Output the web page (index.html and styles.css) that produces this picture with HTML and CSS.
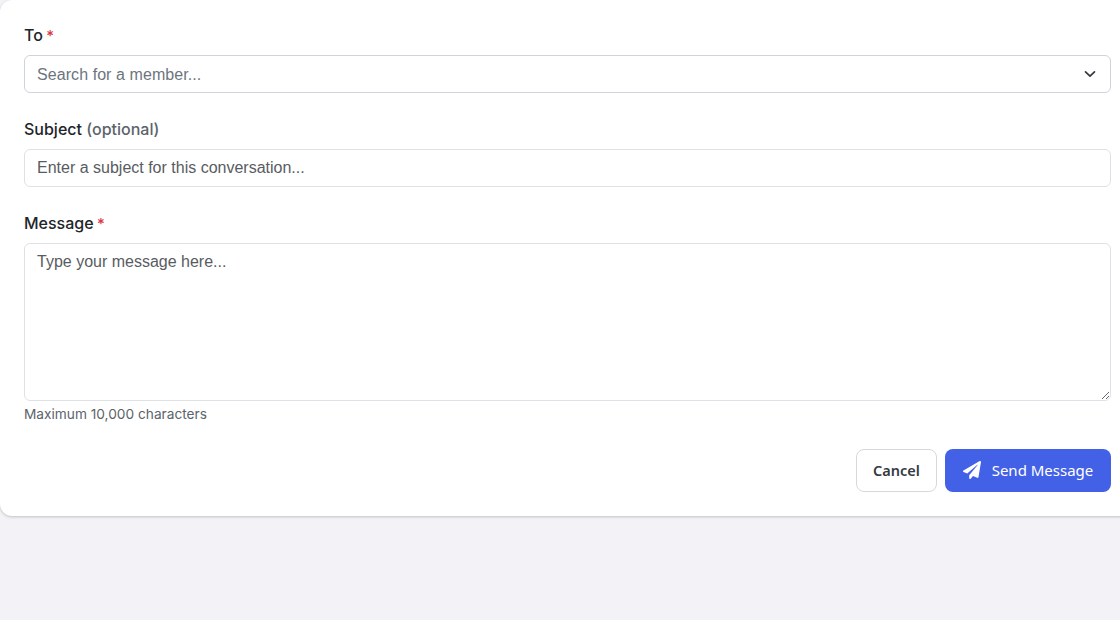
FILE: index.html
```html
<!DOCTYPE html>
<html lang="en">
<head>
    <meta charset="UTF-8">
    <meta name="viewport" content="width=device-width, initial-scale=1.0">
    <title>New Message</title>
    <link rel="stylesheet" href="styles.css">
</head>
<body>
    <form class="message-card">
        <div class="field">
            <label class="field-label" for="to">To <span class="required">*</span></label>
            <div class="select-wrap">
                <input id="to" class="field-input" type="text" placeholder="Search for a member...">
                <svg class="select-arrow" width="16" height="16" viewBox="0 0 16 16" fill="none" stroke="#343a40" stroke-width="1.7" stroke-linecap="round" stroke-linejoin="round">
                    <path d="M3.500 5.800l4.500 4.400 4.500-4.400"/>
                </svg>
            </div>
        </div>

        <div class="field">
            <label class="field-label" for="subject">Subject <span class="optional">(optional)</span></label>
            <input id="subject" class="field-input subject-input" type="text" placeholder="Enter a subject for this conversation...">
        </div>

        <div class="field field-last">
            <label class="field-label" for="message">Message <span class="required">*</span></label>
            <textarea id="message" class="field-input message-input" placeholder="Type your message here..."></textarea>
            <p class="field-hint">Maximum 10,000 characters</p>
        </div>

        <div class="actions">
            <button type="button" class="btn btn-cancel">Cancel</button>
            <button type="submit" class="btn btn-send">
                <svg width="18" height="18" viewBox="0 0 512 512" fill="#fff">
                    <path d="M476 3.2L12.500 270.600c-18.100 10.400-15.800 35.600 2.200 43.200L121 358.400l287.300-253.200c5.500-4.900 13.300 2.600 8.600 8.300L176 407v80.500c0 23.600 28.500 32.900 42.500 15.800L282 426l124.600 52.200c14.200 6 30.400-2.900 33-18.200l72-432C515 7.800 493.300-6.800 476 3.200z"/>
                </svg>
                Send Message
            </button>
        </div>
    </form>
</body>
</html>
```

FILE: styles.css
```css
/* General Styling */
body {
    margin: 0;
    height: 620px;
    overflow: hidden;
    background-color: #f2f2f7;
    font-family: Inter, sans-serif;
}

/* Card runs past the right edge of the window */
.message-card {
    box-sizing: border-box;
    width: 1135px;
    height: 516px;
    padding: 24px 24px 0;
    background-color: #fff;
    border-radius: 12px;
    box-shadow: 0 1px 3px rgba(0, 0, 0, 0.2);
}

.field {
    margin-bottom: 25px;
}

.field-last {
    margin-bottom: 26px;
}

.field-label {
    display: block;
    height: 23px;
    margin-bottom: 8px;
    font-size: 16px;
    line-height: 23px;
    font-weight: 500;
    color: #212529;
}

.required {
    margin-left: -1px;
    font-size: 15px;
    color: #dc3545;
}

.optional {
    color: #5c636a;
}

.field-input {
    display: block;
    box-sizing: border-box;
    width: 100%;
    height: 38px;
    margin: 0;
    padding: 6px 12px;
    border: 1px solid #dee2e6;
    border-radius: 6px;
    background-color: #fff;
    font-family: "Liberation Sans", Arial, sans-serif;
    font-size: 16px;
    line-height: 24px;
    color: #212529;
    outline: none;
}

.field-input::placeholder {
    color: #595c5f;
    opacity: 1;
}

.select-wrap {
    position: relative;
}

.select-wrap .field-input {
    padding-top: 8px;
    padding-bottom: 6px;
    border-color: #ced4da;
    letter-spacing: 0.07px;
}

.select-wrap .field-input::placeholder {
    color: #6c757d;
}

.select-arrow {
    position: absolute;
    top: 11px;
    right: 13px;
}

.message-input {
    height: 158px;
    resize: vertical;
}

.field-hint {
    margin: 5px 0 0;
    font-size: 13.7px;
    line-height: 17px;
    color: #5c636a;
}

/* Buttons */
.actions {
    display: flex;
    justify-content: flex-end;
    gap: 8px;
}

.btn {
    display: flex;
    align-items: center;
    box-sizing: border-box;
    height: 43px;
    padding-bottom: 2px;
    border-radius: 8px;
    font-family: "Noto Sans", sans-serif;
    font-size: 15px;
    cursor: pointer;
}

.btn-cancel {
    width: 81px;
    justify-content: center;
    border: 1px solid #d5d9de;
    background-color: #fff;
    color: #343a40;
    font-size: 14.5px;
    font-weight: 600;
}

.btn-send {
    width: 166px;
    justify-content: center;
    gap: 11px;
    border: none;
    background-color: #4361e6;
    color: #fff;
    font-weight: 400;
}
```
